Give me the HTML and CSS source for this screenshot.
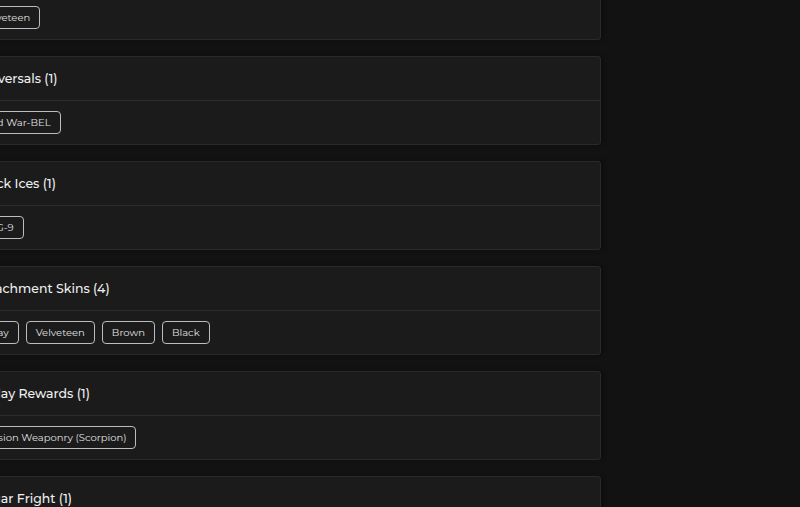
FILE: index.html
```html
<!DOCTYPE html>
<html>
<head>
<meta charset="utf-8">
<link rel="stylesheet" href="styles.css">
</head>
<body>
<div class="page">
  <div class="list">
    <section class="card">
      <div class="card-head">Attachment Skins (1)</div>
      <div class="card-body"><span class="chip">Velveteen</span></div>
    </section>
    <section class="card">
      <div class="card-head">Universals (1)</div>
      <div class="card-body"><span class="chip">Cold War-BEL</span></div>
    </section>
    <section class="card">
      <div class="card-head">Black Ices (1)</div>
      <div class="card-body"><span class="chip">AUG-9</span></div>
    </section>
    <section class="card">
      <div class="card-head">Attachment Skins (4)</div>
      <div class="card-body"><span class="chip">Spray</span><span class="chip">Velveteen</span><span class="chip">Brown</span><span class="chip">Black</span></div>
    </section>
    <section class="card">
      <div class="card-head">Friday Rewards (1)</div>
      <div class="card-body"><span class="chip">Mission Weaponry (Scorpion)</span></div>
    </section>
    <section class="card">
      <div class="card-head">Sugar Fright (1)</div>
      <div class="card-body"><span class="chip">Frost</span></div>
    </section>
  </div>
</div>
</body>
</html>
```
FILE: styles.css
```css
html, body {
  margin: 0;
  padding: 0;
  background: #121212;
  height: 100%;
  overflow: hidden;
}
.page {
  font-family: "Montserrat", "Inter", "Liberation Sans", sans-serif;
  color: #e8e8e8;
}
.list {
  width: 631px;
  margin-left: -30px;
  margin-top: -49px;
  display: flex;
  flex-direction: column;
  gap: 16px;
}
.card {
  background: #1b1b1b;
  border: 1px solid #2a2a2a;
  border-radius: 3px;
  box-shadow: 3px 0 4px rgba(0,0,0,0.25);
}
.card-head {
  height: 44px;
  display: flex;
  align-items: center;
  padding: 0 5px;
  font-size: 12.5px;
  font-weight: 500;
  color: #f0f0f0;
  border-bottom: 1px solid #2c2c2c;
  box-sizing: border-box;
}
.card-body {
  height: 43px;
  box-sizing: border-box;
  padding: 10px 0 10px 0;
  display: flex;
  gap: 7px;
}
.chip {
  height: 23px;
  box-sizing: border-box;
  border: 1px solid #bdbdbd;
  border-radius: 4px;
  padding: 0 9px;
  font-size: 10px;
  color: #e0e0e0;
  display: flex;
  align-items: center;
  white-space: nowrap;
}
```
